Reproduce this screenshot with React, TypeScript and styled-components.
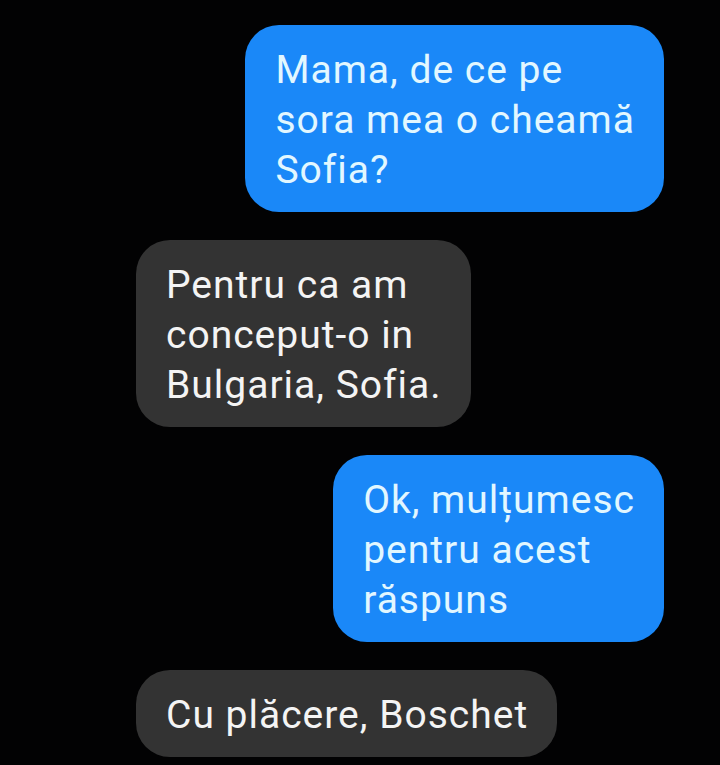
import React from "react";
import styled, { createGlobalStyle } from "styled-components";

const Global = createGlobalStyle`
  html, body {
    margin: 0;
    padding: 0;
    background: #000;
  }
  body {
    font-family: Roboto, "Noto Sans", Arial, sans-serif;
  }
`;

const Screen = styled.div`
  width: 720px;
  height: 765px;
  background: #020203;
  display: flex;
  flex-direction: column;
  gap: 28px;
  padding: 25px 56px 0 136px;
  box-sizing: border-box;
  overflow: hidden;
`;

const Row = styled.div<{ $mine: boolean }>`
  display: flex;
  justify-content: ${(p) => (p.$mine ? "flex-end" : "flex-start")};
`;

const Bubble = styled.div<{ $mine: boolean }>`
  background: ${(p) => (p.$mine ? "#1a88f8" : "#333333")};
  color: ${(p) => (p.$mine ? "#e2f7ff" : "#f4f4f4")};
  font-size: 39px;
  line-height: 50px;
  padding: 20px 29px 17px 30px;
  border-radius: 34px;
  white-space: nowrap;
  letter-spacing: 1px;
`;

const messages: { mine: boolean; lines: string[] }[] = [
  { mine: true, lines: ["Mama, de ce pe", "sora mea o cheamă", "Sofia?"] },
  { mine: false, lines: ["Pentru ca am", "conceput-o in", "Bulgaria, Sofia."] },
  { mine: true, lines: ["Ok, mulțumesc", "pentru acest", "răspuns"] },
  { mine: false, lines: ["Cu plăcere, Boschet"] },
];

export default function App() {
  return (
    <>
      <Global />
      <Screen>
        {messages.map((m, i) => (
          <Row key={i} $mine={m.mine}>
            <Bubble $mine={m.mine}>
              {m.lines.map((l, j) => (
                <React.Fragment key={j}>
                  {j > 0 && <br />}
                  {l}
                </React.Fragment>
              ))}
            </Bubble>
          </Row>
        ))}
      </Screen>
    </>
  );
}
